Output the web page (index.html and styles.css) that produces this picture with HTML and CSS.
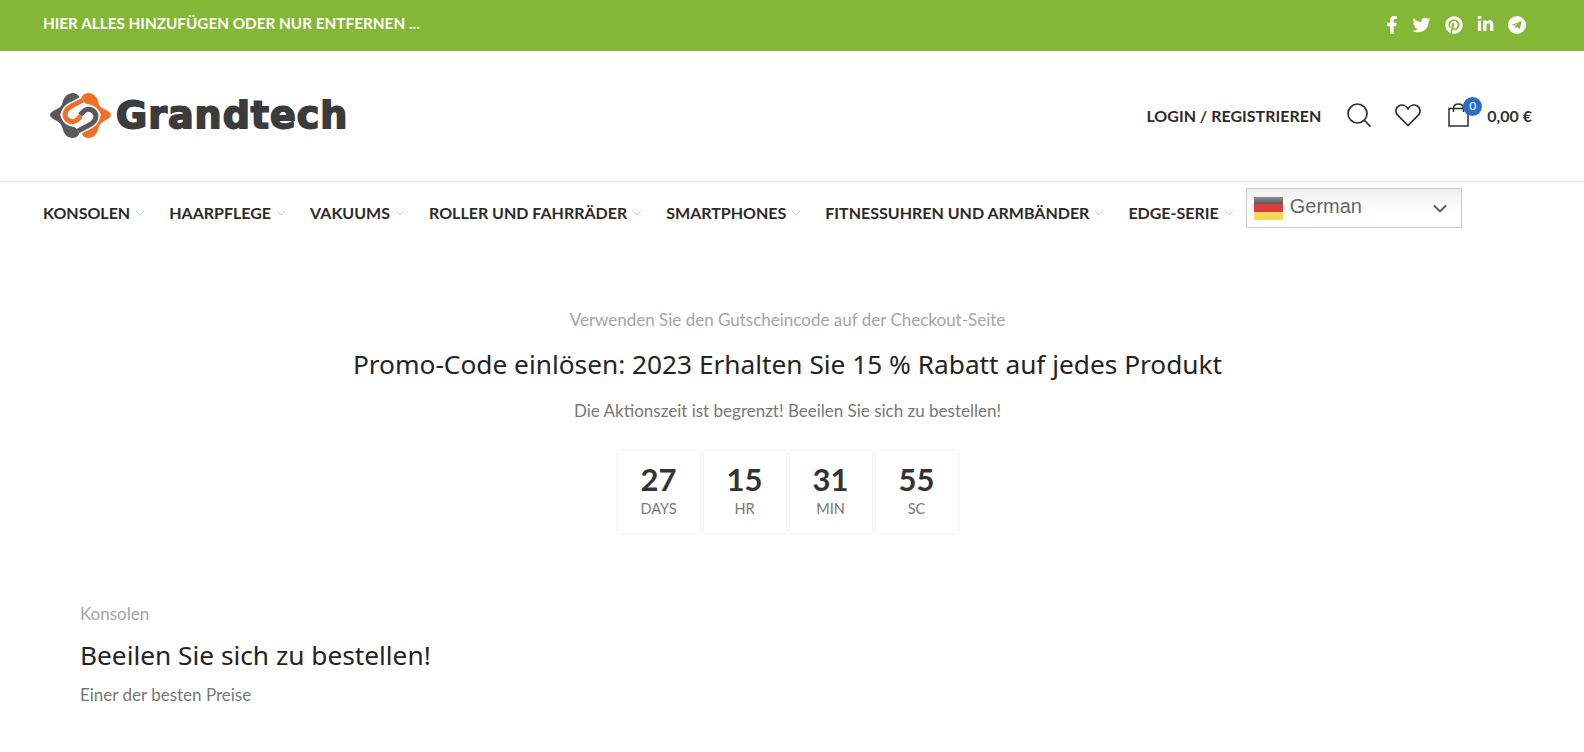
FILE: index.html
```html
<!DOCTYPE html>
<html lang="de">
<head>
<meta charset="utf-8">
<title>Grandtech</title>
<link rel="stylesheet" href="styles.css">
</head>
<body>
<div class="topbar">
  <span class="topbar-text">HIER ALLES HINZUFÜGEN ODER NUR ENTFERNEN ...</span>
  <div class="social">
    <svg class="ic-fb" viewBox="0 0 320 512"><path d="M279.14 288l14.22-92.66h-88.91v-60.13c0-25.35 12.42-50.06 52.24-50.06h40.42V6.26S260.43 0 225.36 0c-73.22 0-121.08 44.38-121.08 124.72v70.62H22.89V288h81.39v224h100.17V288z"/></svg>
    <svg class="ic-tw" viewBox="0 0 512 512"><path d="M459.37 151.716c.325 4.548.325 9.097.325 13.645 0 138.72-105.583 298.558-298.558 298.558-59.452 0-114.68-17.219-161.137-47.106 8.447.974 16.568 1.299 25.34 1.299 49.055 0 94.213-16.568 130.274-44.832-46.132-.975-84.792-31.188-98.112-72.772 6.498.974 12.995 1.624 19.818 1.624 9.421 0 18.843-1.3 27.614-3.573-48.081-9.747-84.143-51.98-84.143-102.985v-1.299c13.969 7.797 30.214 12.67 47.431 13.319-28.264-18.843-46.781-51.005-46.781-87.391 0-19.492 5.197-37.36 14.294-52.954 51.655 63.675 129.3 105.258 216.365 109.807-1.624-7.797-2.599-15.918-2.599-24.04 0-57.828 46.782-104.934 104.934-104.934 30.213 0 57.502 12.67 76.67 33.137 23.715-4.548 46.456-13.32 66.599-25.34-7.798 24.366-24.366 44.833-46.132 57.827 21.117-2.273 41.584-8.122 60.426-16.243-14.292 20.791-32.161 39.308-52.628 54.253z"/></svg>
    <svg class="ic-pi" viewBox="0 0 496 512"><path d="M496 256c0 137-111 248-248 248-25.6 0-50.2-3.9-73.4-11.1 10.1-16.5 25.2-43.5 30.8-65 3-11.6 15.4-59 15.4-59 8.1 15.4 31.7 28.5 56.8 28.5 74.8 0 128.7-68.8 128.7-154.3 0-81.9-66.9-143.2-152.9-143.2-107 0-163.9 71.8-163.9 150.1 0 36.4 19.4 81.7 50.3 96.1 4.7 2.2 7.2 1.2 8.3-3.3.8-3.4 5-20.3 6.9-28.1.6-2.5.3-4.7-1.7-7.1-10.1-12.5-18.3-35.3-18.3-56.6 0-54.7 41.4-107.6 112-107.6 60.9 0 103.6 41.5 103.6 100.9 0 67.1-33.9 113.6-78 113.6-24.3 0-42.6-20.1-36.7-44.8 7-29.5 20.5-61.3 20.5-82.6 0-19-10.2-34.9-31.4-34.9-24.9 0-44.9 25.7-44.9 60.2 0 22 7.4 36.8 7.4 36.8s-24.5 103.8-29 123.2c-5 21.4-3 51.6-.9 71.2C65.4 450.9 0 361.1 0 256 0 119 111 8 248 8s248 111 248 248z"/></svg>
    <svg class="ic-in" viewBox="0 0 448 512"><path d="M100.28 448H7.4V148.9h92.88zM53.79 108.1C24.09 108.1 0 83.5 0 53.8a53.79 53.79 0 0 1 107.58 0c0 29.7-24.1 54.3-53.79 54.3zM447.9 448h-92.68V302.4c0-34.7-.7-79.2-48.29-79.2-48.29 0-55.69 37.7-55.69 76.7V448h-92.78V148.9h89.08v40.8h1.3c12.4-23.5 42.69-48.3 87.88-48.3 94 0 111.28 61.9 111.28 142.3V448z" transform="translate(0 -20)"/></svg>
    <svg class="ic-tg" viewBox="0 0 18 18"><circle cx="9" cy="9" r="9"/><path class="tg-plane" d="M3.6 8.9 13.4 5l-1.5 8.2-3-2.2-1.5 1.5-.3-2.5 4-3.5-5 3.1z"/></svg>
  </div>
</div>

<header class="header">
  <a class="logo">
    <svg class="logo-mark" viewBox="0 0 61 45">
      <path class="lg" d="M0 22Q0 19 7 16 12 14 13 8 15 1 22 0 28 0 29.500 5 29 9 24 11 14 12 10 22 14 33 24 34 29 36 29.500 40 28 45 22 45 15 44 13 37 12 31 7 28 0 25 0 22Z"/>
      <path class="lo" transform="translate(61 0) scale(-1 1)" d="M0 22Q0 19 7 16 12 14 13 8 15 1 22 0 28 0 29.500 5 29 9 24 11 14 12 10 22 14 33 24 34 29 36 29.500 40 28 45 22 45 15 44 13 37 12 31 7 28 0 25 0 22Z"/>
      <path class="chain-w" d="M33 7C25 12 15 14 15 22 16 29 23 30 27 27L31 23"/>
      <path class="chain-o" d="M33 7C25 12 15 14 15 22 16 29 23 30 27 27L31 23"/>
      <path class="chain-w" d="M28 38C36 33 46 31 46 23 45 16 38 15 34 18L30 22"/>
      <path class="chain-g" d="M28 38C36 33 46 31 46 23 45 16 38 15 34 18L30 22"/>
    </svg>
    <span class="logo-text">Grandtech</span>
  </a>
  <div class="tools">
    <span class="login">LOGIN / REGISTRIEREN</span>
    <svg class="ic-search" viewBox="0 0 24 24"><circle cx="10.5" cy="10.5" r="9.5"/><path d="M17.5 17.5 23.5 23.5"/></svg>
    <svg class="ic-heart" viewBox="0 0 26 23"><path d="M13 21.5 2.900 11.400C-.2 8.300.6 3.700 3.600 2 6.900.2 10.800 1.100 13 4.800 15.200 1.100 19.100.2 22.400 2c3 1.700 3.800 6.300.7 9.400z"/></svg>
    <div class="cart">
      <svg class="ic-bag" viewBox="0 0 21 24"><path d="M5.500 5.500H1v17.500h19V5.500h-4.500M5.500 9V5.500C5.500 2.800 7.500 1 10.500 1s5 1.800 5 4.500V9M5.500 5.500h10"/></svg>
      <span class="badge">0</span>
    </div>
    <span class="price">0,00 €</span>
  </div>
</header>

<nav class="nav">
  <a class="nav-item">KONSOLEN<svg class="chev" viewBox="0 0 10 6"><path d="M1 1l4 4 4-4"/></svg></a>
  <a class="nav-item">HAARPFLEGE<svg class="chev" viewBox="0 0 10 6"><path d="M1 1l4 4 4-4"/></svg></a>
  <a class="nav-item">VAKUUMS<svg class="chev" viewBox="0 0 10 6"><path d="M1 1l4 4 4-4"/></svg></a>
  <a class="nav-item">ROLLER UND FAHRRÄDER<svg class="chev" viewBox="0 0 10 6"><path d="M1 1l4 4 4-4"/></svg></a>
  <a class="nav-item">SMARTPHONES<svg class="chev" viewBox="0 0 10 6"><path d="M1 1l4 4 4-4"/></svg></a>
  <a class="nav-item">FITNESSUHREN UND ARMBÄNDER<svg class="chev" viewBox="0 0 10 6"><path d="M1 1l4 4 4-4"/></svg></a>
  <a class="nav-item">EDGE-SERIE<svg class="chev" viewBox="0 0 10 6"><path d="M1 1l4 4 4-4"/></svg></a>
  <div class="lang">
    <span class="flag"><i class="f1"></i><i class="f2"></i><i class="f3"></i></span>
    <span class="lang-name">German</span>
    <svg class="lang-chev" viewBox="0 0 14 9"><path d="M1 1.500l6 6 6-6"/></svg>
  </div>
</nav>

<main class="main">
  <section class="promo">
    <p class="promo-sub">Verwenden Sie den Gutscheincode auf der Checkout-Seite</p>
    <h2 class="promo-title">Promo-Code einlösen: 2023 Erhalten Sie 15 % Rabatt auf jedes Produkt</h2>
    <p class="promo-note">Die Aktionszeit ist begrenzt! Beeilen Sie sich zu bestellen!</p>
    <div class="count">
      <div class="cell"><b>27</b><span>DAYS</span></div>
      <div class="cell"><b>15</b><span>HR</span></div>
      <div class="cell"><b>31</b><span>MIN</span></div>
      <div class="cell"><b>55</b><span>SC</span></div>
    </div>
  </section>
  <section class="cat">
    <p class="cat-sub">Konsolen</p>
    <h2 class="cat-title">Beeilen Sie sich zu bestellen!</h2>
    <p class="cat-note">Einer der besten Preise</p>
  </section>
</main>
</body>
</html>
```

FILE: styles.css
```css
* { box-sizing: border-box; }
html, body { margin: 0; padding: 0; background: #fff; overflow: hidden; height: 752px; }
body { font-family: "Lato", "Liberation Sans", sans-serif; color: #242424; }
p, h2 { margin: 0; font-weight: 400; }

.topbar {
  height: 51px;
  background: #83b735;
  display: flex;
  align-items: center;
  justify-content: space-between;
  padding: 0 58px 0 43px;
  color: #fff;
}
.topbar-text { font-size: 15.300px; font-weight: 700; margin-top: -6px; }
.social { display: flex; align-items: center; gap: 14px; margin-top: -2px; }
.social svg { fill: #fff; display: block; }
.ic-fb { width: 12px; height: 18px; }
.ic-tw { width: 19px; height: 18px; }
.ic-pi { width: 18px; height: 18px; }
.ic-in { width: 17px; height: 18px; }
.ic-tg { width: 18px; height: 18px; }
.social .tg-plane { fill: #83b735; }

.header {
  height: 131px;
  border-bottom: 1px solid #e6e6e6;
  display: flex;
  align-items: center;
  justify-content: space-between;
  padding: 0 52px 2px 50px;
}
.logo { display: flex; align-items: center; gap: 5px; }
.logo-mark { width: 61px; height: 45px; display: block; }
.lg { fill: #59595b; }
.lo { fill: #f26f27; }
.chain-o, .chain-g, .chain-w { fill: none; stroke-width: 5; stroke-linejoin: round; }
.chain-w { stroke: #fff; stroke-width: 8; }
.chain-o { stroke: #f26f27; }
.chain-g { stroke: #59595b; }
.logo-text {
  font-family: "DejaVu Sans", sans-serif;
  font-weight: 700;
  font-size: 38px;
  color: #3b3b3d;
  letter-spacing: 1px;
  -webkit-text-stroke: 1.800px #3b3b3d;
  line-height: 45px;
}
.tools { display: flex; align-items: center; }
.login { font-size: 16px; font-weight: 700; color: #2d2a2a; margin-right: 26px; }
.ic-search, .ic-heart, .ic-bag { fill: none; stroke: #2d2d2d; display: block; }
.ic-search { width: 24px; height: 24px; stroke-width: 1.700; margin-right: 24px; }
.ic-heart { width: 26px; height: 23px; stroke-width: 1.700; margin-right: 27px; }
.cart { position: relative; margin-right: 18px; }
.ic-bag { width: 21px; height: 24px; stroke-width: 1.500; }
.badge {
  position: absolute;
  top: -6px;
  left: 15px;
  width: 19px;
  height: 19px;
  border-radius: 50%;
  background: #2a6cc7;
  color: #fff;
  font-size: 12px;
  line-height: 18px;
  text-align: center;
}
.price { font-size: 16px; font-weight: 700; color: #333; }

.nav {
  display: flex;
  align-items: flex-start;
  padding: 6px 0 0 43px;
  height: 49px;
}
.nav-item {
  display: flex;
  align-items: center;
  margin-top: 14px;
  margin-right: 24px;
  font-size: 16px;
  font-weight: 700;
  color: #2d2a2a;
  line-height: 22px;
}
.chev { width: 10px; height: 6px; margin-left: 5px; fill: none; stroke: #cfcfcf; stroke-width: 1; }
.nav-item:nth-of-type(7) { margin-right: 12px; }
.lang {
  width: 216px;
  height: 40px;
  border: 1px solid #ccc;
  background: linear-gradient(#f0f0f0, #fff 60%);
  display: flex;
  align-items: center;
  padding: 0 13px 0 7px;
  font-family: "Liberation Sans", Arial, sans-serif;
}
.flag { width: 29px; height: 23px; display: flex; flex-direction: column; margin-right: 7px; }
.flag i { display: block; flex: 1; }
.f1 { background: linear-gradient(#8d8d8d, #5a5a5a); }
.f2 { background: #dd3b3c; }
.f3 { background: #f6d858; }
.lang-name { flex: 1; font-size: 20px; color: #666; margin-top: -4px; }
.lang-chev { width: 14px; height: 9px; fill: none; stroke: #555; stroke-width: 1.800; margin-right: 1px; }

.main { padding-right: 9px; }
.promo { text-align: center; padding-top: 77px; }
.promo-sub { font-size: 17px; line-height: 24px; color: #a5a5a5; }
.promo-title { font-family: "Noto Sans", sans-serif; font-size: 26.250px; line-height: 34px; color: #242424; margin-top: 15px; }
.promo-note { font-size: 17px; line-height: 24px; color: #777; margin-top: 18px; }
.count { display: flex; justify-content: center; gap: 4px; margin-top: 28px; }
.cell {
  width: 82px;
  height: 82px;
  box-shadow: 0 0 3px rgba(0,0,0,.1);
  display: flex;
  flex-direction: column;
  align-items: center;
  padding-top: 12px;
}
.cell b { font-size: 31px; line-height: 32px; font-weight: 700; color: #333; }
.cell span { font-size: 14.500px; line-height: 20px; color: #777; margin-top: 4px; }

.cat { padding: 69px 0 0 80px; }
.cat-sub { font-size: 17px; line-height: 24px; color: #a5a5a5; }
.cat-title { font-family: "Noto Sans", sans-serif; font-size: 26.250px; line-height: 34px; color: #242424; margin-top: 12px; }
.cat-note { font-size: 17px; line-height: 24px; color: #777; margin-top: 11px; }
```
